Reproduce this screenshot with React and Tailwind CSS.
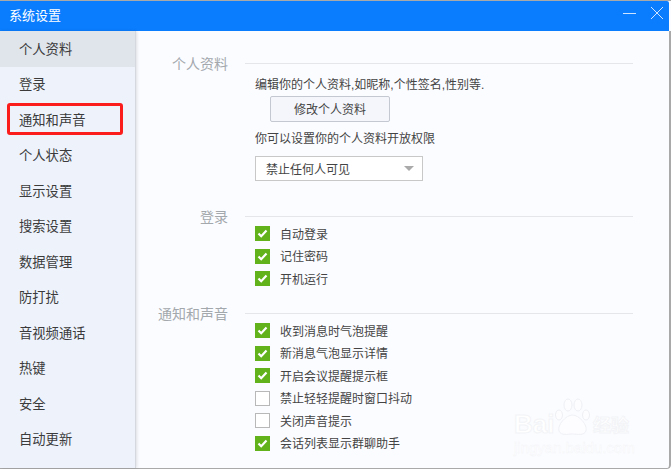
const FONT = "font-['Liberation_Sans','Noto_Sans_CJK_SC',sans-serif]";

const navItems = ["个人资料", "登录", "通知和声音", "个人状态", "显示设置", "搜索设置", "数据管理", "防打扰", "音视频通话", "热键", "安全", "自动更新"];

const CheckRow = ({ label, checked }) => (
  <div className="flex items-center h-[22.5px]">
    {checked ? (
      <span className="w-[15px] h-[15px] bg-[#62b21b] flex items-center justify-center">
        <svg width="11" height="9" viewBox="0 0 11 9">
          <path d="M1.5 4.5 L4.2 7.2 L9.5 1.5" fill="none" stroke="#fff" strokeWidth="2.2" />
        </svg>
      </span>
    ) : (
      <span className="w-[15px] h-[15px] border border-[#b8b8b8] bg-white" />
    )}
    <span className="ml-[10px] pt-[2px] text-[12px] text-[#444]">{label}</span>
  </div>
);

const Section = ({ title, children, className }) => (
  <div className={className}>
    <div className="flex items-center h-[20px]">
      <span className="w-[91px] pt-[2px] text-right text-[14px] text-[#a3a8ad]">{title}</span>
      <div className="ml-[17px] w-[388px] h-px bg-[#e4e6ea]" />
    </div>
    <div className="ml-[118px]">{children}</div>
  </div>
);

const Watermark = () => (
  <div className="absolute left-[514px] top-[397px] w-[122px] h-[60px] text-white [-webkit-text-stroke:1px_#f3f4f7] select-none">
    <div className="flex items-end h-[38px]">
      <span className="text-[26px] leading-[24px] font-bold w-[41px]">Bai</span>
      <svg className="-ml-[1px]" width="37" height="38" viewBox="0 0 37 38">
        <g fill="#fdfdff" stroke="#eef0f4" strokeWidth="1">
          <ellipse cx="5" cy="17" rx="3.5" ry="5" />
          <ellipse cx="14" cy="7" rx="4" ry="6" />
          <ellipse cx="24" cy="7" rx="4" ry="6" />
          <ellipse cx="32" cy="17" rx="3.5" ry="5" />
          <path d="M18.5 17 C12 17 3 27 5 33 C7 38 14 36 18.5 36 C23 36 30 38 32 33 C34 27 25 17 18.5 17 Z" />
        </g>
      </svg>
      <span className="ml-[2px] text-[18px] leading-[20px] font-bold">经验</span>
    </div>
    <div className="mt-[4px] text-[15px] leading-[16px] [-webkit-text-stroke:0.4px_#f3f4f7]">jingyan.baidu.com</div>
  </div>
);

const App = () => {
  return (
    <div className={`w-[671px] h-[469px] bg-[#fbfcff] overflow-hidden flex flex-col relative rounded-br-[4px] border-t border-[#a9a9a9] ${FONT}`}>
      <div className="h-[30px] bg-[#0a7dff] mr-[2px] rounded-tr-[2px] flex items-center pl-[9px] pr-[2px] pb-[1px] shrink-0">
        <span className="text-[13px] text-white">系统设置</span>
        <svg className="ml-auto self-start mt-[5px]" width="44" height="14" viewBox="0 0 44 14">
          <path d="M0 7.5 H13" stroke="#cfe4ff" strokeWidth="1" />
          <path d="M28 1 L40 13 M40 1 L28 13" stroke="#cfe4ff" strokeWidth="1" />
        </svg>
      </div>

      <div className="flex flex-1 min-h-0 border-r-2 border-b border-[#a9a9a9] rounded-br-[4px]">
        <div className="w-[136px] bg-[#eef3fb] border-r border-[#d5d9df] shadow-[1px_0_3px_rgba(0,0,0,0.12)] flex flex-col shrink-0">
          {navItems.map((item, i) => (
            <div
              key={item}
              className={`h-[35.5px] shrink-0 flex items-center pl-[19px] pt-[2px] text-[13.3px] text-[#3b3b3b] ${i === 0 ? "bg-[#e0e5eb]" : ""}`}
            >
              {item}
            </div>
          ))}
        </div>

        <div className="flex-1 pt-[22px] pl-[1px]">
          <Section title="个人资料">
            <div className="mt-[4px] text-[12px] text-[#444] leading-[16px]">编辑你的个人资料,如昵称,个性签名,性别等.</div>
            <button className="mt-[3px] ml-[15px] w-[120px] h-[26px] pt-[2px] block bg-[#f4f6fc] border border-[#c4c8d0] rounded-[2px] text-[12px] text-[#444]">
              修改个人资料
            </button>
            <div className="mt-[9px] text-[12px] text-[#444] leading-[16px]">你可以设置你的个人资料开放权限</div>
            <div className="mt-[9px] w-[168px] h-[25px] bg-white border border-[#c8c8c8] flex items-center pl-[10px] pr-[8px] text-[12px] text-[#444]">
              <span className="pt-[2px]">禁止任何人可见</span>
              <span className="ml-auto w-0 h-0 border-x-[5px] border-x-transparent border-t-[5px] border-t-[#aaa]" />
            </div>
          </Section>

          <Section title="登录" className="mt-[25px]">
            <div className="-mt-[3.75px]">
              <CheckRow label="自动登录" checked />
              <CheckRow label="记住密码" checked />
              <CheckRow label="开机运行" checked />
            </div>
          </Section>

          <Section title="通知和声音" className="mt-[13.25px]">
            <div className="-mt-[3.75px]">
              <CheckRow label="收到消息时气泡提醒" checked />
              <CheckRow label="新消息气泡显示详情" checked />
              <CheckRow label="开启会议提醒提示框" checked />
              <CheckRow label="禁止轻轻提醒时窗口抖动" />
              <CheckRow label="关闭声音提示" />
              <CheckRow label="会话列表显示群聊助手" checked />
            </div>
          </Section>
        </div>
      </div>

      <div className="absolute left-[7px] top-[102px] w-[116px] h-[32px] border-[3px] border-[#fb1c1c] rounded-[3px]" />
      <Watermark />
    </div>
  );
};

export default App;
